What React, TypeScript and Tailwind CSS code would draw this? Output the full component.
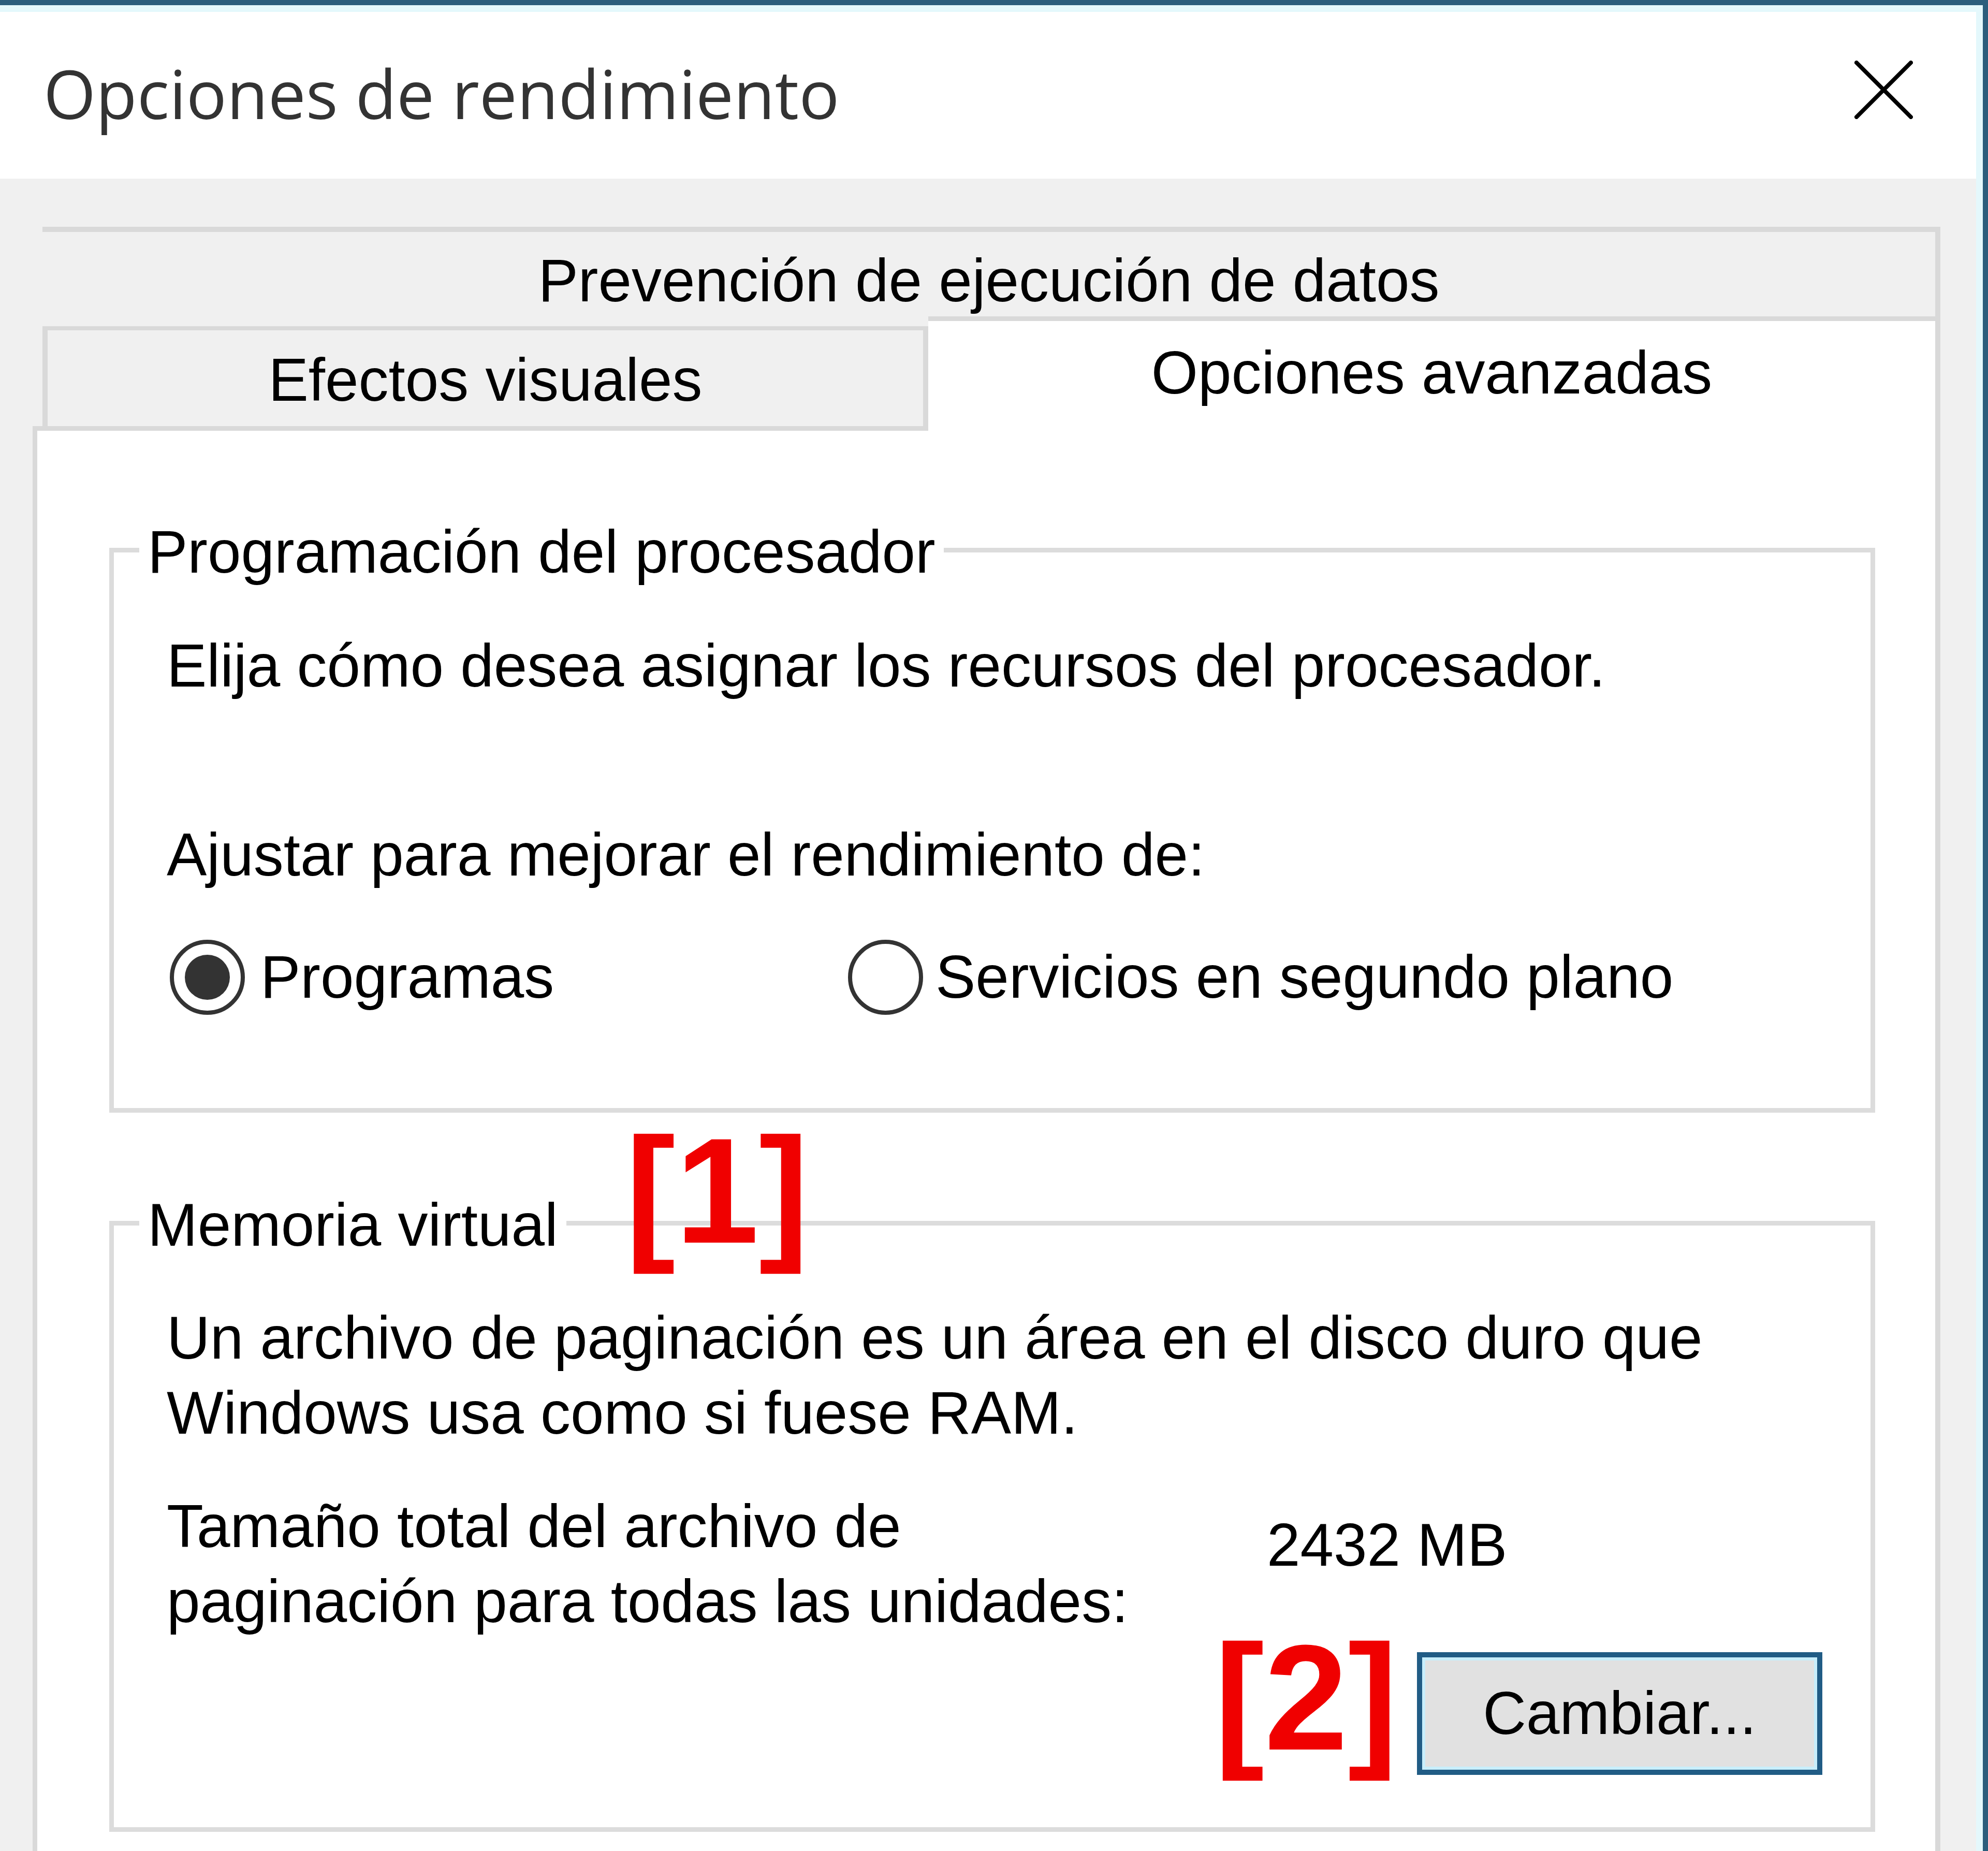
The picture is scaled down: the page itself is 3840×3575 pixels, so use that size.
export default function App() {
  const line = "h-[9px] mt-[64px] bg-[#dcdcdc]";
  return (
    <div className="w-[3840px] h-[3575px] overflow-hidden border-t-[10px] border-r-[10px] border-[#2b5d7c] bg-[#f0f0f0] font-['Liberation_Sans',Arial,sans-serif] text-[116px] leading-[145px] text-black">
      <div className="h-full flex flex-col border-t-[13px] border-r-[13px] border-[#e4f8fc]">
        {/* title bar */}
        <div className="h-[322px] flex-none bg-white flex items-start justify-between">
          <div className="ml-[84px] mt-[92px] font-['Open_Sans',sans-serif] text-[130px] leading-[130px] text-[#333] whitespace-nowrap">
            Opciones de rendimiento
          </div>
          <svg className="mt-[94px] mr-[122px] flex-none" width="113" height="113" viewBox="0 0 113 113">
            <path d="M4 4 L109 109 M109 4 L4 109" stroke="#000" strokeWidth="8" strokeLinecap="round" fill="none" />
          </svg>
        </div>

        {/* body */}
        <div className="flex-1 min-h-0 flex flex-col pl-[63px] pr-[69px]">
          {/* tab row 1 */}
          <div className="ml-[19px] mt-[93px] h-[173px] flex-none border-t-[10px] border-r-[10px] border-[#d9d9d9] flex justify-center pt-[22px]">
            <span className="whitespace-nowrap">Prevención de ejecución de datos</span>
          </div>
          {/* tab row 2 */}
          <div className="flex h-[221px] flex-none">
            <div className="w-[1730px] flex-none flex flex-col justify-end border-b-[9px] border-[#d9d9d9]">
              <div className="ml-[19px] h-[193px] border-t-[8px] border-l-[10px] border-r-[10px] border-[#d9d9d9] bg-[#f0f0f0] flex justify-center pt-[24px]">
                <span className="whitespace-nowrap">Efectos visuales</span>
              </div>
            </div>
            <div className="flex-1 bg-white border-t-[9px] border-r-[10px] border-[#d9d9d9] flex justify-center pt-[28px]">
              <span className="whitespace-nowrap">Opciones avanzadas</span>
            </div>
          </div>

          {/* panel */}
          <div className="flex-1 bg-white border-l-[9px] border-r-[10px] border-[#d9d9d9] pt-[226px] flex flex-col">
            {/* group 1 */}
            <div className="ml-[139px] mr-[116px] flex flex-col border-x-[9px] border-b-[9px] border-[#dcdcdc] pb-[180px]">
              <div className="-mt-[64px] -mx-[9px] flex items-start h-[145px]">
                <div className={`w-[58px] flex-none ${line}`} />
                <div className="px-[16px] whitespace-nowrap">Programación del procesador</div>
                <div className={`flex-1 ${line}`} />
              </div>
              <div className="pl-[102px] flex flex-col">
                <p className="mt-[75px] whitespace-nowrap">Elija cómo desea asignar los recursos del procesador.</p>
                <p className="mt-[220px] whitespace-nowrap">Ajustar para mejorar el rendimiento de:</p>
                <div className="mt-[91px] ml-[6px] h-[145px] flex items-center">
                  <div className="w-[1310px] flex-none flex items-center">
                    <div className="w-[145px] h-[145px] flex-none rounded-full border-[8px] border-[#333] flex items-center justify-center">
                      <div className="w-[87px] h-[87px] rounded-full bg-[#333]" />
                    </div>
                    <span className="ml-[30px] whitespace-nowrap">Programas</span>
                  </div>
                  <div className="flex items-center">
                    <div className="w-[145px] h-[145px] flex-none rounded-full border-[8px] border-[#333]" />
                    <span className="ml-[24px] whitespace-nowrap">Servicios en segundo plano</span>
                  </div>
                </div>
              </div>
            </div>

            {/* group 2 */}
            <div className="mt-[209px] ml-[139px] mr-[116px] flex flex-col border-x-[9px] border-b-[9px] border-[#dcdcdc] pb-[101px]">
              <div className="relative -mt-[64px] -mx-[9px] flex items-start h-[145px]">
                <div className={`w-[58px] flex-none ${line}`} />
                <div className="px-[16px] whitespace-nowrap">Memoria virtual</div>
                <div className={`flex-1 ${line}`} />
                <span className="absolute left-[997px] -top-[140px] text-[290px] leading-[290px] font-bold text-[#f00000] whitespace-nowrap">
                  [1]
                </span>
              </div>
              <div className="pl-[102px] flex flex-col">
                <p className="mt-[73px] whitespace-nowrap">
                  Un archivo de paginación es un área en el disco duro que
                  <br />
                  Windows usa como si fuese RAM.
                </p>
                <div className="mt-[74px] flex items-start">
                  <p className="w-[2125px] flex-none whitespace-nowrap">
                    Tamaño total del archivo de
                    <br />
                    paginación para todas las unidades:
                  </p>
                  <span className="mt-[36px] whitespace-nowrap">2432 MB</span>
                </div>
              </div>
              <div className="mt-[25px] mr-[93px] flex justify-end items-start">
                <span className="-mt-[58px] mr-[37px] text-[290px] leading-[290px] font-bold text-[#f00000] whitespace-nowrap">
                  [2]
                </span>
                <div className="w-[783px] h-[237px] flex-none border-[10px] border-[#215c85] bg-[#e1e1e1] shadow-[inset_0_0_0_6px_#c8eefb] flex items-center justify-center">
                  <span className="whitespace-nowrap">Cambiar...</span>
                </div>
              </div>
            </div>
          </div>
        </div>
      </div>
    </div>
  );
}
